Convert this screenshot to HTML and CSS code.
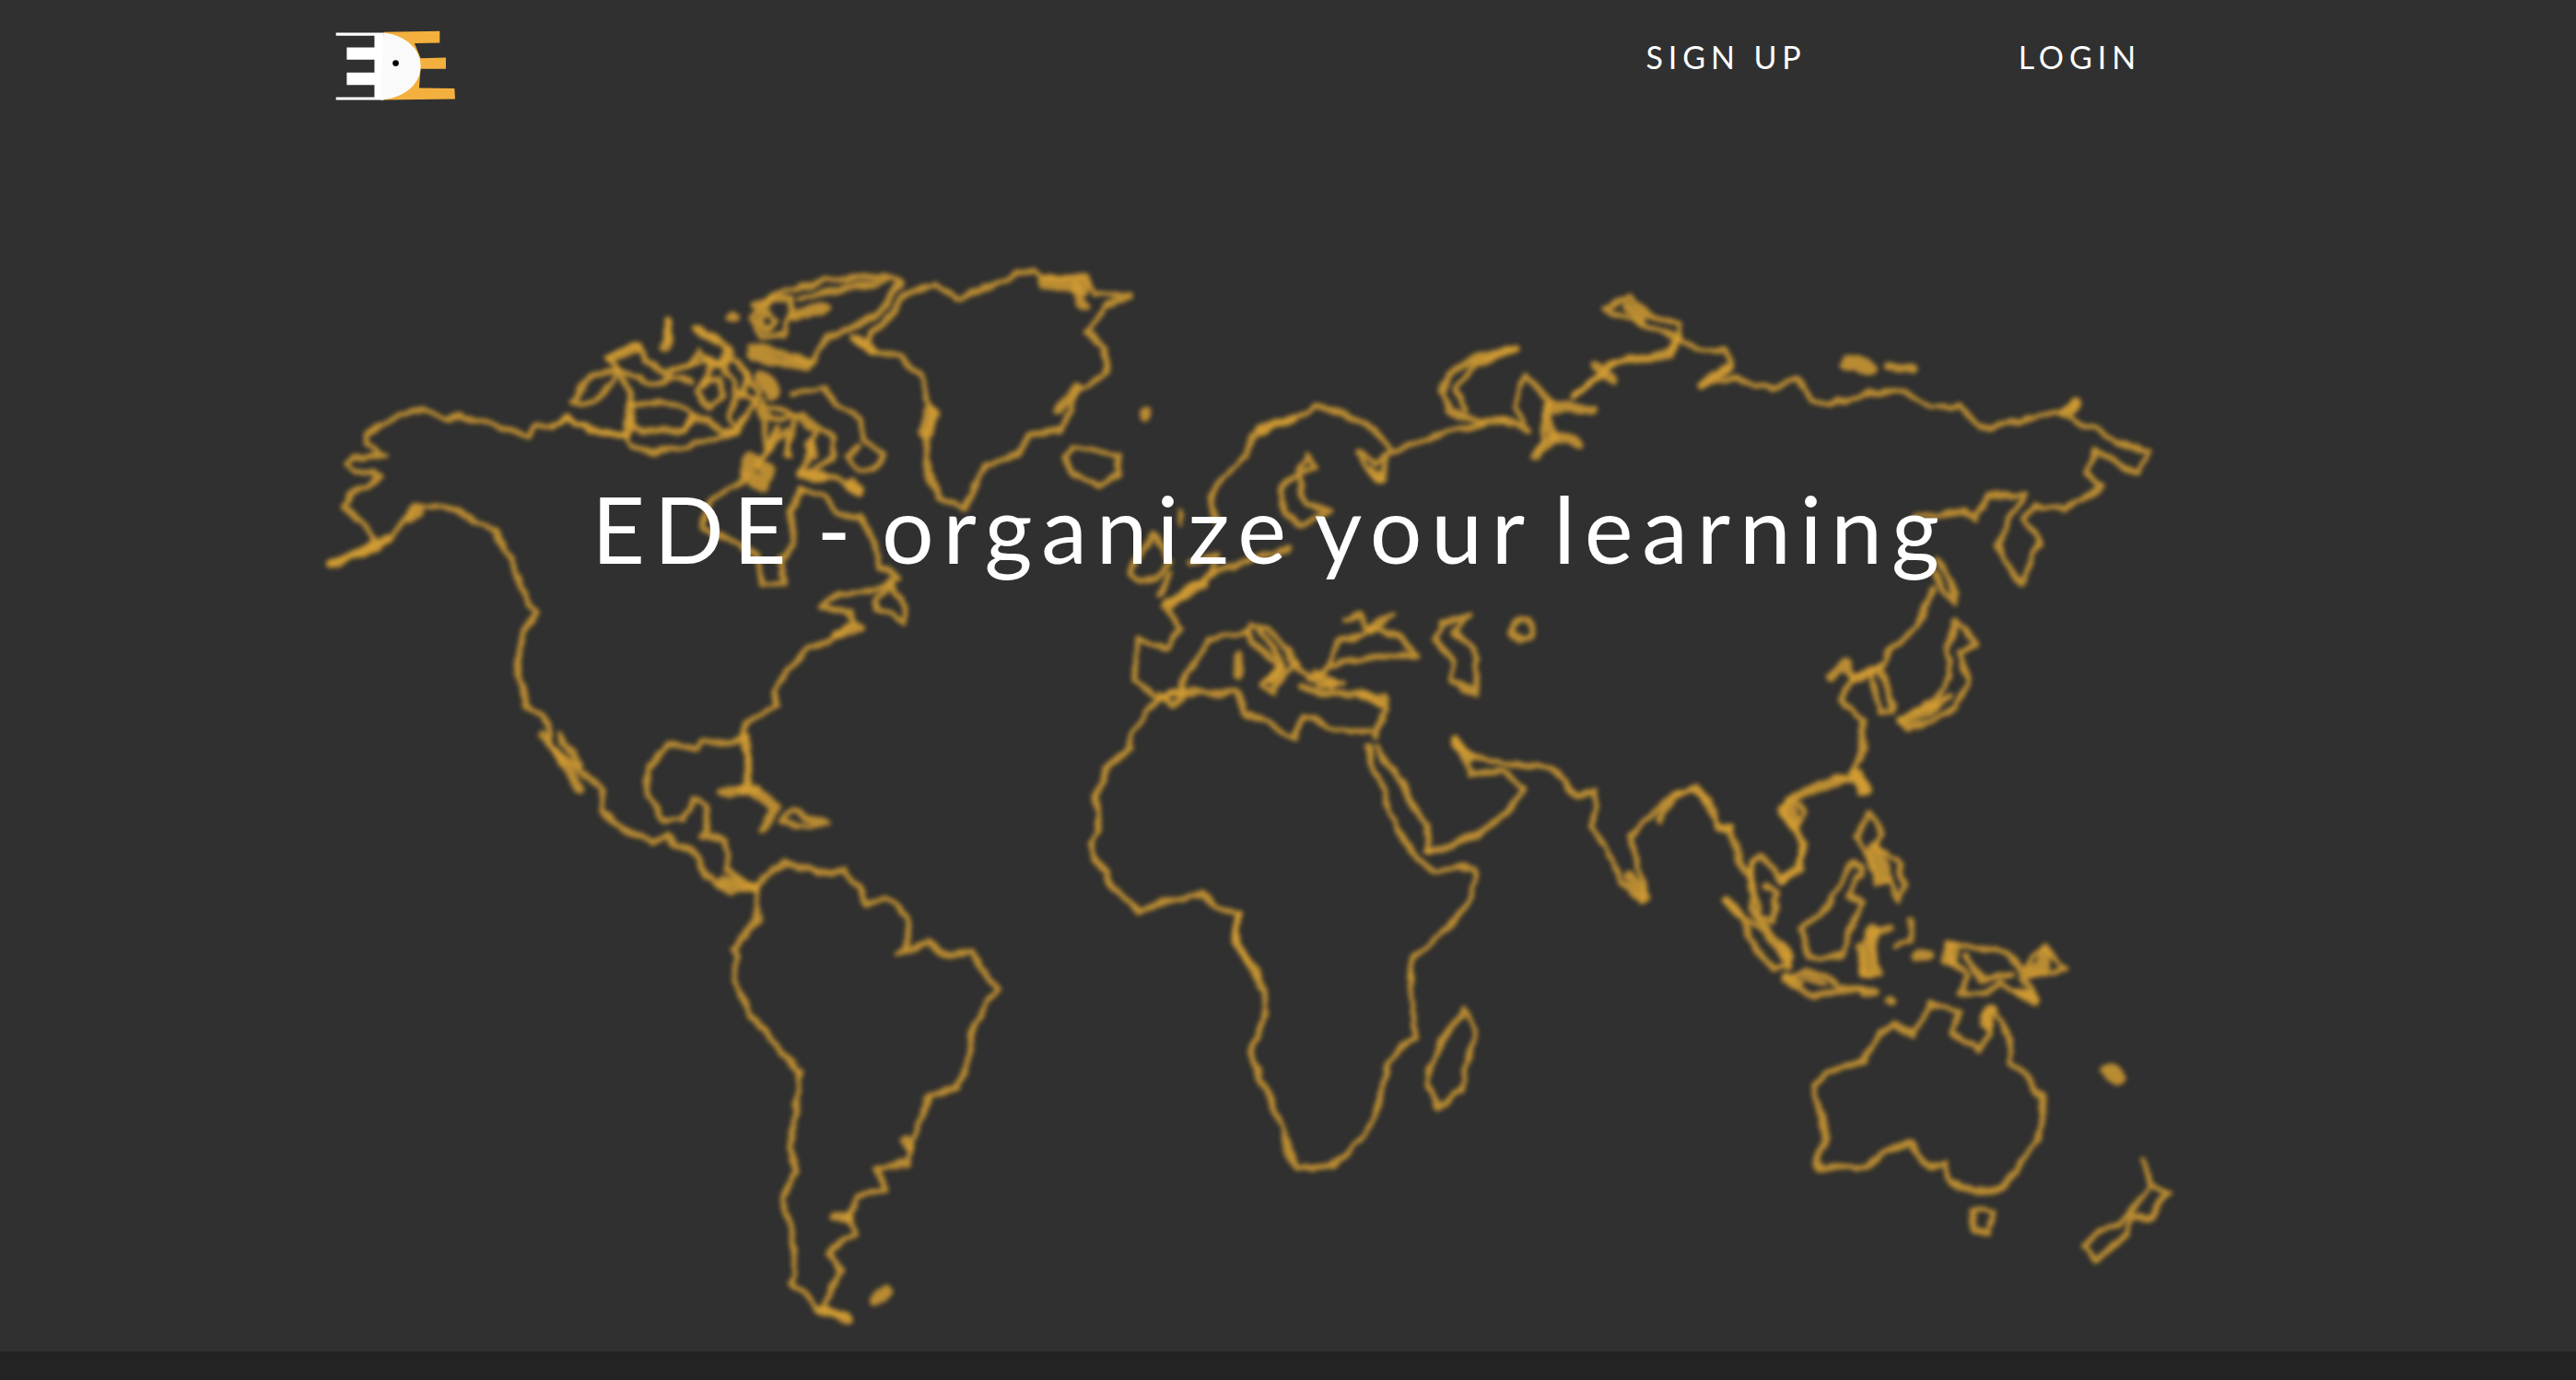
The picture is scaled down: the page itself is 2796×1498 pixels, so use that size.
FILE: index.html
```html
<!DOCTYPE html>
<html lang="en">
<head>
<meta charset="utf-8">
<title>EDE - organize your learning</title>
<link rel="stylesheet" href="styles.css">
</head>
<body>
<div class="page">
  <svg class="map" width="2796" height="1498" viewBox="0 0 2796 1498" aria-hidden="true">
    <defs>
      <filter id="coast" filterUnits="userSpaceOnUse" x="0" y="0" width="2796" height="1498">
        <feTurbulence type="fractalNoise" baseFrequency="0.045" numOctaves="2" seed="4" result="noise"/>
        <feDisplacementMap in="SourceGraphic" in2="noise" scale="11" xChannelSelector="R" yChannelSelector="G" result="moved"/>
        <feGaussianBlur in="moved" stdDeviation="2.9"/>
      </filter>
    </defs>
    <g filter="url(#coast)">
    <g transform="translate(340 270) scale(.35714)">
      <path d="M60 960 130 930 200 890 160 850 125 815 90 780 110 745 170 720 200 690 130 670 100 650 130 630 215 630 165 590 160 565 210 530 270 500 335 490 400 515 450 510 540 530 600 550 650 580 670 540 720 535 770 515 830 545 900 560 960 565"/>
      <path d="M60 960 150 925 240 885 265 830 310 785 370 780 440 795 500 835 550 855 590 925 620 990 645 1060 680 1105 640 1160 615 1300 650 1380 700 1420 720 1490 760 1568"/>
      <path class="thick" d="M60 960 130 930 230 885"/>
      <path class="thick" d="M290 820 325 800"/>
      <path d="M750 1470 810 1568"/>
      <path d="M1075 220 1070 290"/>
    </g>
    <g transform="translate(600 270) scale(.42088)">
      <path d="M0 460 40 435 90 470 190 480 205 510 265 525 340 510 400 490 470 470 490 440"/>
      <path d="M45 395 100 330 170 310 150 345 110 390Z"/>
      <path d="M170 310 195 360 200 400 310 395 355 430 340 470 260 470 200 460 190 420"/>
      <path class="thick" d="M200 400 195 480"/>
      <path d="M140 285 215 245 240 290 290 320 350 300 400 280"/>
      <path d="M140 285 190 320 250 350 300 330 360 340"/>
      <path d="M340 470 360 430 400 440 430 470 470 470"/>
      <path d="M395 350 410 300 470 290 510 330 480 380"/>
      <path d="M350 300 380 260 430 300 460 260"/>
      <path class="thick" d="M295 190 290 260"/>
      <path class="thick" d="M150 285 215 255"/>
      <path d="M370 205 430 240 460 270 440 310 400 280"/>
      <path class="thick" d="M375 210 420 235"/>
      <circle cx="465" cy="175" r="8"/>
      <path d="M510 180 560 130 620 130 600 220 540 230Z"/>
      <path d="M550 160 575 185 550 210 530 185Z"/>
      <path class="thick" d="M625 170 705 148"/>
      <path d="M520 150 600 110 700 85 850 70 900 85 870 130 830 180 780 200 700 230 670 300 600 270 510 250"/>
      <path d="M640 130 760 100 860 85"/>
      <path class="thick" d="M510 270 590 290 660 305"/>
      <path d="M400 340 370 370 400 410 440 380 430 340Z"/>
      <path d="M440 320 470 340 460 440 480 470 530 370 500 320"/>
      <path class="wide" d="M545 335 565 365"/>
      <path d="M480 370 520 390 545 440 555 520 600 470 610 540"/>
      <path d="M550 400 620 430 680 470 660 520 640 580"/>
      <path d="M580 460 560 520 530 560"/>
      <path d="M620 450 600 540"/>
      <path d="M620 375 700 360 730 400 795 440 800 490 850 530 830 570 780 570 755 530 790 510"/>
      <path d="M540 390 560 440 650 430 730 490 720 540 650 580 720 590 790 625"/>
      <path class="thick" d="M660 500 670 530"/>
      <path class="thick" d="M640 580 700 585"/>
      <path class="thick" d="M770 610 790 625"/>
      <path class="star" d="M510 545 560 565 540 610 500 580Z"/>
      <path d="M400 660 500 590"/>
      <path d="M640 620 700 640 740 690 790 690 830 760 840 820 890 850 830 880 740 890 690 925 760 935 780 960 720 1010 660 1030 600 1090 570 1140 580 1180 500 1220 490 1260 505 1330 510 1385"/>
      <path class="thick" d="M730 1000 790 975"/>
      <path d="M400 660 385 720 430 740 530 790 540 870 590 870 590 800 625 750 610 680 640 620"/>
      <path d="M830 910 870 870 910 920 910 965 840 930Z"/>
      <path d="M800 240 850 195 910 115 980 90 1040 130 1100 105 1240 50 1270 75 1380 75 1400 115 1490 125 1420 150 1380 215 1420 250 1430 320 1350 370 1340 420 1310 465 1230 480 1200 530 1120 550 1090 610 1060 670 1000 640 965 580 965 480 985 420 950 330 900 280 810 260 770 225 800 240"/>
      <path class="wide" d="M1265 85 1365 95"/>
      <path class="thick" d="M1350 100 1370 150"/>
      <path class="wide" d="M975 425 965 465"/>
      <path class="thick" d="M1305 415 1350 360"/>
      <path class="thick" d="M785 230 820 260"/>
      <path d="M1320 545 1350 510 1400 525 1460 530 1460 585 1410 610 1340 580Z"/>
      <path class="blob" d="M1527 425h.1"/>
      <path class="thick" d="M495 1400 520 1395"/>
    </g>
    <g transform="translate(500 800) scale(.44444)">
      <path d="M200 0 350 130 340 180 400 225 470 260 500 235 530 265 580 290 600 340 660 380 720 365"/>
      <path class="thick" d="M235 30 290 125"/>
      <path d="M700 0 660 10 590 15 580 35 510 20 460 70 455 140 490 200 540 200 570 150 600 170 605 230 590 240 645 250 650 330 720 365"/>
      <path d="M700 0 700 120"/>
      <path class="thick" d="M640 135 710 130 770 170 735 220"/>
      <path d="M780 210 810 180 890 210 810 215Z"/>
      <path class="thick" d="M640 355 715 365"/>
      <path d="M720 365 790 305 870 330 940 325 990 405 1040 395 1095 440 1085 510 1070 530 1140 500 1180 530 1250 530 1310 615 1255 700 1240 800 1210 855 1150 870 1120 930 1090 1040 1015 1055 1040 1105 970 1125 945 1175 960 1210 900 1260 925 1300 890 1390 950 1425 870 1400 810 1330 815 1250 790 1125 820 1060 805 1010 820 900 830 820 760 740 710 680 665 590 675 540 665 520 725 450 720 365"/>
      <path class="thick" d="M915 1170 950 1175"/>
      <path class="thick" d="M1085 980 1095 1005"/>
      <path class="thick" d="M880 1400 945 1425"/>
      <path class="thick" d="M1005 1375 1040 1352"/>
    </g>
    <g transform="translate(1180 360) scale(.44643)">
      <path d="M410 240 460 230 560 185 620 195 720 250 740 290 700 320 655 290 680 340 710 360 730 300 820 260 880 240 960 230"/>
      <path class="thick" d="M415 238 500 215"/>
      <path class="thick" d="M690 340 715 355"/>
      <path d="M1010 210 1070 240 1040 180 1070 105 1120 170 1100 290"/>
      <path class="thick" d="M1090 300 1130 260 1120 180 1230 190"/>
      <path class="thick" d="M1130 260 1195 270"/>
      <path d="M1180 160 1250 100 1260 75 1420 50 1430 20"/>
      <path d="M1045 40 950 60 880 100 860 150 880 190 960 225 1010 210"/>
      <path d="M1040 45 930 90 895 140 920 190"/>
      <path d="M1030 45 940 75"/>
      <path d="M410 240 380 310 310 380 300 420 320 470"/>
      <path d="M530 300 555 325 510 350 465 380 480 440 520 470 590 435 530 420 510 340Z"/>
      <path class="thin" d="M230 430 225 470"/>
      <path d="M490 530 380 560 300 590 230 640 190 670 230 720 200 770 120 750 115 850 170 890 230 880 240 830 295 750 390 725"/>
      <path class="thick" d="M200 660 280 610"/>
      <path d="M105 590 130 540 160 490 200 560 170 600 120 610Z"/>
      <path d="M200 590 180 640"/>
      <path d="M250 560 320 540 300 590"/>
      <path d="M400 715 440 720 510 810 480 830 450 875 430 860 470 810 400 760 390 725"/>
      <path d="M420 730 480 810"/>
      <path class="thick" d="M370 785 368 830"/>
      <path class="thick" d="M450 845 470 815"/>
      <path d="M510 810 560 860 620 860"/>
      <path d="M540 850 590 810 700 790 800 790 760 740 690 720 610 760 590 810"/>
      <path class="thick" d="M555 830 595 860"/>
      <path d="M630 700 660 690 680 720 740 690 690 730"/>
      <path d="M520 870 590 880 680 885 730 915 700 985"/>
      <path class="thick" d="M670 885 720 895"/>
      <path d="M170 890 210 880 260 880 370 875 380 930 440 950 500 990 530 935 610 970 690 970"/>
      <path d="M175 880 205 910 235 885"/>
      <path d="M170 890 110 970 110 1010 50 1060 20 1140 25 1220 10 1240 25 1290 60 1350 130 1410 190 1385 280 1370 310 1395 370 1420 365 1490 410 1568"/>
      <path d="M680 1010 720 1120 760 1220 810 1290 840 1310 940 1300 950 1320 930 1380 880 1450 790 1520 780 1568"/>
      <path d="M700 1010 750 1070 790 1150 830 1200 830 1265"/>
      <path d="M830 1265 950 1225 1030 1160 1060 1110 1010 1070 930 1075 890 990 950 1040 1010 1050 1130 1060 1190 1130 1235 1120 1230 1200 1300 1340 1350 1385 1350 1330 1320 1230 1420 1130 1480 1100 1530 1200 1568 1210"/>
      <path class="thick" d="M895 995 930 1035"/>
      <path class="thick" d="M1320 1325 1355 1375"/>
      <path d="M860 710 930 690 890 730 950 790 945 880 880 850 890 800 850 745Z"/>
      <circle cx="1058" cy="725" r="26"/>
    </g>
    <g transform="translate(1640 300) scale(.45918)">
      <path d="M225 80 280 45 320 90 400 110 395 145 340 125Z"/>
      <path class="thick" d="M275 70 310 105"/>
      <path d="M395 145 380 190 230 205 205 240 150 280"/>
      <path class="thick" d="M205 215 240 245"/>
      <path d="M395 145 440 175 510 175 520 215 450 260 530 240 620 265 680 245 710 290 760 300 850 275 920 270 1000 310 1060 305 1110 360 1220 335 1300 325 1330 295 1345 300 1320 335 1400 370 1430 395 1510 415 1480 470 1440 440 1380 410 1360 460 1400 495 1310 550 1240 540 1215 570 1250 630 1205 725 1150 640 1185 560 1215 515 1130 515 1100 575 1070 555 960 570"/>
      <path class="thick" d="M1305 325 1340 295"/>
      <path class="thick" d="M450 255 510 220"/>
      <path class="wide" d="M795 205 845 212"/>
      <path class="thick" d="M895 212 945 218"/>
      <path d="M1010 670 1040 720 1055 770 1020 745 1005 700"/>
      <path d="M1000 740 960 830 890 890 880 920 810 950"/>
      <path d="M1050 815 1100 865 1060 890 1080 950 1055 1020 935 1070 920 1050 1010 990 1040 940 1030 880Z"/>
      <path d="M1040 990 960 1030"/>
      <path class="thick" d="M925 1055 1000 1015"/>
      <path d="M870 920 900 1000 900 1030 870 1030 850 940"/>
      <path class="thick" d="M755 945 790 915 810 955 855 930"/>
      <path d="M810 950 780 1000 830 1050 830 1130 810 1170 800 1180 670 1225 640 1260 670 1310 690 1350 680 1400 640 1430"/>
      <path class="thick" d="M820 1175 830 1215"/>
      <path d="M640 1260 665 1235 695 1270 665 1310Z"/>
    </g>
    <g transform="translate(1800 820) scale(.36996)">
      <path d="M0 190 50 120 100 90 160 150 170 215 215 220 240 320 270 370"/>
      <path d="M600 90 590 70 540 70 510 95 380 130 360 170 395 200 430 260 410 320 360 370 300 295 270 310 280 400 300 470 330 490 350 400 310 380"/>
      <path class="thick" d="M575 50 605 100"/>
      <path class="thick" d="M385 150 400 195"/>
      <path d="M270 310 270 440 330 530 380 570 380 620"/>
      <path class="thick" d="M360 565 380 590"/>
      <path d="M200 430 240 460 290 570 340 630 380 610 290 500Z"/>
      <path class="thick" d="M200 430 235 460"/>
      <path d="M370 660 430 630 500 650 530 680 600 690 550 690 460 710Z"/>
      <path d="M430 650 490 670"/>
      <path class="thick" d="M375 650 410 665"/>
      <path class="thick" d="M605 700 630 695"/>
      <path class="thick" d="M675 715h1"/>
      <path d="M420 510 490 450 570 320 600 330 560 420 600 430 570 500 540 590 470 595 445 590Z"/>
      <path d="M620 170 650 230 640 270 700 300 720 380 700 430 680 370 640 380 620 300 580 240Z"/>
      <path class="wide" d="M635 275 665 360"/>
      <path class="wide" d="M625 520 615 630"/>
      <path d="M610 520 680 510 620 530 650 640 600 640 590 560"/>
      <path d="M740 480 740 540 690 560"/>
      <path class="thick" d="M760 585 790 590"/>
      <path d="M850 550 900 560 1030 580 1070 630 1140 560 1190 630 1110 640 1070 650 1110 720 1060 700 1000 670 960 700 885 695 910 640 850 600Z"/>
      <path class="wide" d="M858 565 852 595"/>
      <path class="thick" d="M1140 575 1130 620 1090 635"/>
      <path class="thick" d="M1060 695 1105 720"/>
      <path d="M900 590 960 660 1040 640"/>
      <path d="M450 970 520 920 600 900 630 840 690 780 745 820 800 730 885 755 860 810 935 865 970 820 965 760 985 740 1030 830 1030 900 1090 950 1130 1020 1120 1130 1060 1190 1020 1260 930 1285 860 1250 840 1195 790 1205 735 1140 650 1165 610 1210 520 1205 480 1215 465 1185 490 1130 470 1030Z"/>
      <path class="thick" d="M975 745 965 790"/>
      <path d="M920 1335 985 1335 970 1400 925 1390Z"/>
      <path class="wide" d="M1325 928 1345 940"/>
      <path d="M1420 1190 1445 1260 1490 1285 1440 1360 1390 1350 1370 1400 1285 1485 1250 1440 1290 1400 1350 1370 1390 1330 1445 1260"/>
    </g>
    <g transform="translate(1100 800) scale(.82919 .44524)">
      <path d="M295 430 290 510 320 570 330 670 310 770 335 880 360 1000 370 1055 415 1045 460 975 480 885 490 790 525 730 520 570"/>
      <path d="M590 665 605 720 585 860 555 905 540 840 560 740Z"/>
    </g>
    </g>
  </svg>
  <header class="topbar">
    <a class="logo" href="#" aria-label="EDE">
      <svg width="132" height="77" viewBox="70 70 395 230">
        <path fill="#f4b03e" d="M230 75 412 72 412 110 330 112 350 160 432 158 432 195 350 195 345 257 460 258 462 293 220 296Z"/>
        <path fill="#fff" d="M75 77H230V87H75ZM75 287H230V296H75ZM200 85H230V290H200ZM110 125H200V165H110ZM110 207H200V247H110Z"/>
        <path fill="#fafafa" d="M230 77C300 85 350 130 350 185C350 250 290 290 220 296Z"/>
        <circle cx="269" cy="176" r="10" fill="#000"/>
      </svg>
    </a>
    <nav class="nav">
      <a class="nav-link" href="#">SIGN UP</a>
      <a class="nav-link" href="#">LOGIN</a>
    </nav>
  </header>
  <main class="hero">
    <h1 class="title">EDE - organize your learning</h1>
  </main>
  <footer class="footer"></footer>
</div>
</body>
</html>
```

FILE: styles.css
```css
* { box-sizing: border-box; }
html, body { margin: 0; height: 100%; background: #303030; }
body { font-family: Lato, "Liberation Sans", sans-serif; color: #fff; overflow: hidden; }
a { color: inherit; text-decoration: none; }

.page { position: relative; height: 1498px; display: flex; flex-direction: column; }

.map { position: absolute; left: 0; top: 0; }
.map path, .map circle {
  fill: none;
  stroke: #d29c33;
  stroke-opacity: .85;
  stroke-width: 6.5px;
  stroke-linejoin: round;
  stroke-linecap: round;
  vector-effect: non-scaling-stroke;
}
.map .thick { stroke-width: 11px; }
.map .wide { stroke-width: 18px; }
.map .blob { stroke-width: 15px; }
.map .star { stroke-width: 15px; }
.map .thin { stroke-width: 4px; }

.topbar {
  position: relative;
  height: 130px;
  padding: 33px 472px 0 363px;
  display: flex;
  justify-content: space-between;
  align-items: flex-start;
}
.logo { display: block; line-height: 0; }
.nav { display: flex; gap: 230px; padding-top: 7px; }
.nav-link { font-size: 34px; letter-spacing: 5.9px; line-height: 44px; }

.hero {
  position: relative;
  flex: 1;
  padding: 383px 39px 0 0;
  display: flex;
  justify-content: center;
  align-items: flex-start;
}
.title { margin: 0; font-size: 100px; font-weight: 400; letter-spacing: 9.8px; word-spacing: -12px; line-height: 120px; }

.footer { position: relative; height: 31px; background: #232323; }
```
